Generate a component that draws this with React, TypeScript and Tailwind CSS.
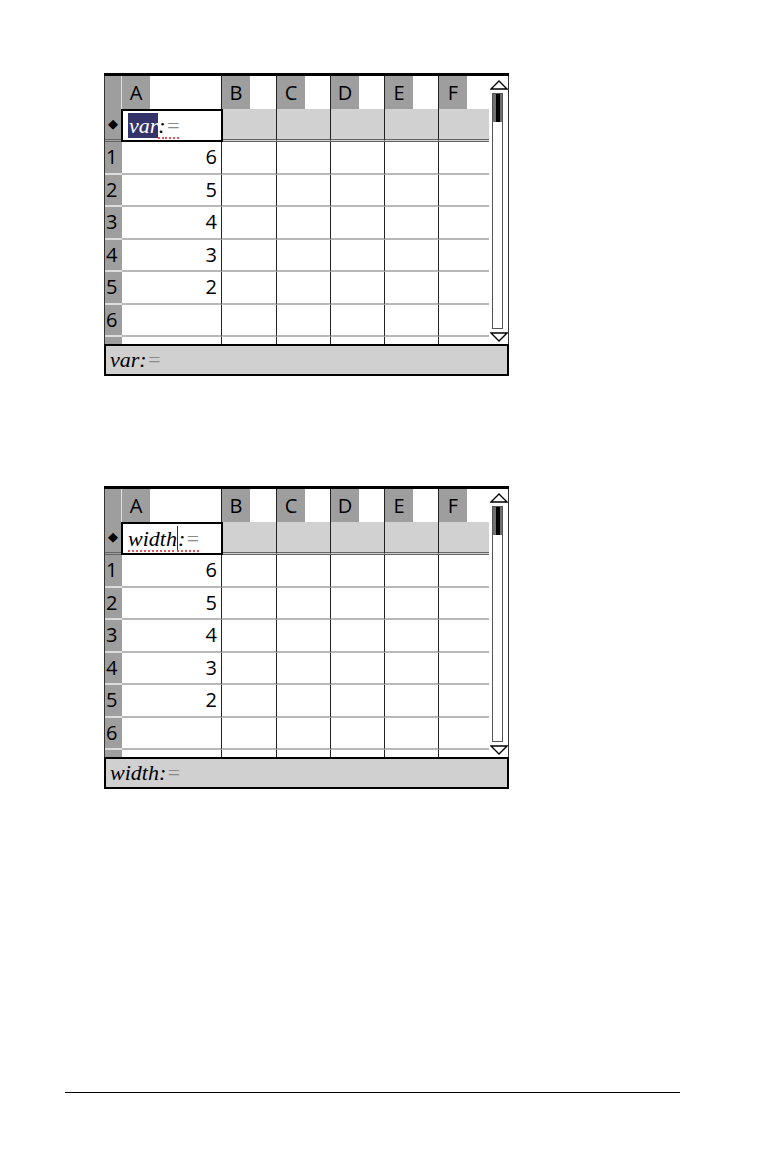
import React from 'react';

const COLS = 'grid grid-cols-[17px_100px_55px_54px_54px_54px_50px]';
const LETTERS = ['A', 'B', 'C', 'D', 'E', 'F'];
const VALUES = ['6', '5', '4', '3', '2', ''];

const sans = { fontFamily: '"Open Sans", "DejaVu Sans", sans-serif' };
const serif = { fontFamily: '"Liberation Serif", "Times New Roman", serif' };

const UpArrow: React.FC = () => (
  <svg width="18" height="10" viewBox="0 0 18 10" className="block mx-auto">
    <polygon points="1,9 9,1 17,9" fill="white" stroke="black" strokeWidth="1.3" />
  </svg>
);

const DownArrow: React.FC = () => (
  <svg width="18" height="10" viewBox="0 0 18 10" className="block mx-auto">
    <polygon points="1,1 9,9 17,1" fill="white" stroke="black" strokeWidth="1.3" />
  </svg>
);

const Scrollbar: React.FC = () => (
  <div className="w-[19px] h-[268px] bg-white flex flex-col pt-[4px]">
    <UpArrow />
    <div className="mt-[3px] h-[236px] w-[11px] ml-[3px] border border-[#555] bg-white">
      <div className="h-[28px] bg-[#707070] flex justify-center">
        <div className="w-[4px] h-full bg-black" />
      </div>
    </div>
    <div className="mt-[3px]">
      <DownArrow />
    </div>
  </div>
);

type Mode = 'highlight' | 'cursor';

const FormulaText: React.FC<{ word: string; mode: Mode }> = ({ word, mode }) => {
  if (mode === 'highlight') {
    return (
      <div className="flex items-center h-full pl-[5px] text-[22px] italic leading-none" style={serif}>
        <span className="bg-[#34346a] text-white pl-[1px] h-[25px] flex items-center">{word}</span>
        <span className="underline decoration-dotted decoration-[#e05a5a] underline-offset-[5px]">
          <span className="text-black">:</span>
          <span className="text-[#8a8a8a]">=</span>
        </span>
      </div>
    );
  }
  return (
    <div className="flex items-center h-full pl-[5px] text-[22px] italic leading-none" style={serif}>
      <span className="underline decoration-dotted decoration-[#e05a5a] underline-offset-[5px] flex items-center">
        <span className="text-black">{word}</span>
        <span className="inline-block w-px h-[25px] bg-[#5a1f1f]" />
        <span className="text-black">:</span>
        <span className="text-[#8a8a8a]">=</span>
      </span>
    </div>
  );
};

const Sheet: React.FC<{ word: string; mode: Mode }> = ({ word, mode }) => {
  return (
    <div className="w-[405px] ml-[104px] flex flex-col text-black" style={sans}>
      <div className="h-[3px] bg-black" />
      <div className="flex border-l border-r border-[#333]">
        <div className="w-[384px] flex flex-col">
          {/* column headers */}
          <div className={`${COLS} h-[33px]`}>
            <div className="bg-[#9e9e9e] border-r border-[#dedede]" />
            {LETTERS.map((l, i) => (
              <div key={l} className={i < 5 ? 'flex border-r border-[#222]' : 'flex'}>
                <div className="w-[28px] h-full bg-[#9e9e9e] flex items-center justify-center text-[20px] leading-none">{l}</div>
              </div>
            ))}
          </div>

          {/* formula row */}
          <div className={`${COLS} h-[33px]`}>
            <div className="bg-[#9e9e9e] border-r border-[#dedede] border-b-[3px] border-b-[#666] border-double flex items-center justify-center text-[13px] leading-none pb-[1px]">
              ◆
            </div>
            <div className="border-2 border-black bg-white ml-[-1px] mr-[-1px] relative z-10">
              <FormulaText word={word} mode={mode} />
            </div>
            {LETTERS.slice(1).map((l, i) => (
              <div
                key={l}
                className={
                  i < 4
                    ? 'bg-[#d1d1d1] border-r border-r-[#222] border-b-[3px] border-b-[#666] border-double'
                    : 'bg-[#d1d1d1] border-b-[3px] border-b-[#666] border-double'
                }
              />
            ))}
          </div>

          {/* data rows */}
          {VALUES.map((v, r) => (
            <div key={r} className={`${COLS} h-[32.5px]`}>
              <div className="bg-[#9e9e9e] border-b-2 border-[#dcdcdc] flex items-center pl-[1px] text-[20px] leading-none">
                {r + 1}
              </div>
              <div className="border-b-2 border-b-[#b8b8b8] border-r border-r-[#222] flex items-center justify-end pr-[4px] text-[20px] leading-none">
                {v}
              </div>
              {LETTERS.slice(1).map((l, i) => (
                <div
                  key={l}
                  className={
                    i < 4
                      ? 'border-b-2 border-b-[#b8b8b8] border-r border-r-[#222]'
                      : 'border-b-2 border-b-[#b8b8b8]'
                  }
                />
              ))}
            </div>
          ))}

          {/* partially visible row */}
          <div className={`${COLS} h-[7px]`}>
            <div className="bg-[#9e9e9e]" />
            {LETTERS.map((l, i) => (
              <div key={l} className={i < 5 ? 'border-r border-[#222]' : ''} />
            ))}
          </div>
        </div>
        <Scrollbar />
      </div>

      {/* entry line */}
      <div className="h-[32px] border-2 border-black bg-[#d0d0d0] flex items-center pl-[4px] text-[22px] italic leading-none" style={serif}>
        <span className="text-black">{word}:</span>
        <span className="text-[#8a8a8a]">=</span>
      </div>
    </div>
  );
};

const App: React.FC = () => {
  return (
    <div className="w-[764px] h-[1160px] bg-white pt-[73px] flex flex-col">
      <Sheet word="var" mode="highlight" />
      <div className="mt-[110px]">
        <Sheet word="width" mode="cursor" />
      </div>
      <div className="mt-[303px] ml-[65px] w-[615px] h-px bg-black" />
    </div>
  );
};

export default App;
